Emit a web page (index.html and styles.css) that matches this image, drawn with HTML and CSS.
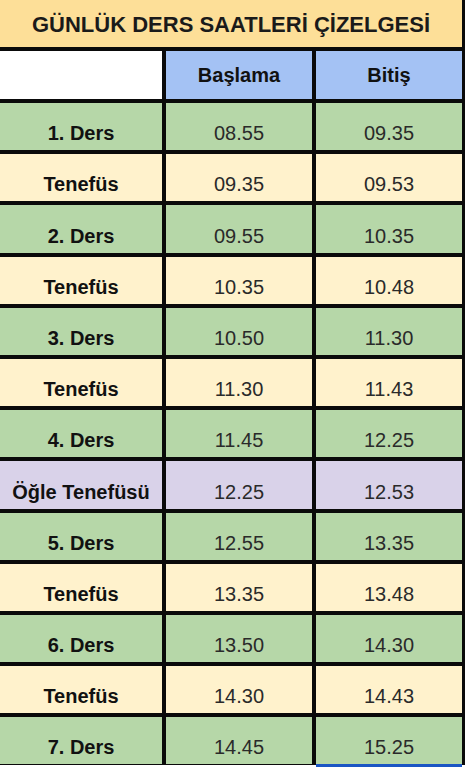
FILE: index.html
```html
<!DOCTYPE html>
<html lang="tr">
<head>
<meta charset="utf-8">
<title>Günlük Ders Saatleri Çizelgesi</title>
<link rel="stylesheet" href="styles.css">
</head>
<body>
<div class="sheet">
  <div class="title">GÜNLÜK DERS SAATLERİ ÇİZELGESİ</div>
  <div class="cell blank"></div>
  <div class="cell head">Başlama</div>
  <div class="cell head">Bitiş</div>

  <div class="cell lbl ders">1. Ders</div><div class="cell num ders">08.55</div><div class="cell num ders">09.35</div>
  <div class="cell lbl ten">Tenefüs</div><div class="cell num ten">09.35</div><div class="cell num ten">09.53</div>
  <div class="cell lbl ders">2. Ders</div><div class="cell num ders">09.55</div><div class="cell num ders">10.35</div>
  <div class="cell lbl ten">Tenefüs</div><div class="cell num ten">10.35</div><div class="cell num ten">10.48</div>
  <div class="cell lbl ders">3. Ders</div><div class="cell num ders">10.50</div><div class="cell num ders">11.30</div>
  <div class="cell lbl ten">Tenefüs</div><div class="cell num ten">11.30</div><div class="cell num ten">11.43</div>
  <div class="cell lbl ders">4. Ders</div><div class="cell num ders">11.45</div><div class="cell num ders">12.25</div>
  <div class="cell lbl ogle">Öğle Tenefüsü</div><div class="cell num ogle">12.25</div><div class="cell num ogle">12.53</div>
  <div class="cell lbl ders">5. Ders</div><div class="cell num ders">12.55</div><div class="cell num ders">13.35</div>
  <div class="cell lbl ten">Tenefüs</div><div class="cell num ten">13.35</div><div class="cell num ten">13.48</div>
  <div class="cell lbl ders">6. Ders</div><div class="cell num ders">13.50</div><div class="cell num ders">14.30</div>
  <div class="cell lbl ten">Tenefüs</div><div class="cell num ten">14.30</div><div class="cell num ten">14.43</div>
  <div class="cell lbl ders">7. Ders</div><div class="cell num ders">14.45</div><div class="cell num ders selected">15.25</div>
</div>
</body>
</html>
```
FILE: styles.css
```css
html, body {
  margin: 0;
  padding: 0;
  background: #ffffff;
}

body {
  font-family: "Liberation Sans", Arial, sans-serif;
  width: 465px;
  height: 768px;
  overflow: hidden;
}

.sheet {
  display: grid;
  grid-template-columns: 162px 146px 146px;
  grid-template-rows: 47px 48px repeat(13, 47.2px);
  gap: 4px;
  padding-right: 3px;
  padding-bottom: 1px;
  background: #0a0a0a;
  width: 465px;
  box-sizing: border-box;
}

.title {
  grid-column: 1 / 4;
  background: #fddf98;
  color: #1a1a1a;
  font-weight: bold;
  font-size: 22px;
  display: flex;
  align-items: center;
  justify-content: center;
  padding-top: 2px;
}

.cell {
  display: flex;
  justify-content: center;
  align-items: flex-end;
  padding-bottom: 5px;
  box-sizing: border-box;
  font-size: 20px;
  line-height: 23px;
}

.blank {
  background: #ffffff;
}

.head {
  background: #a4c2f4;
  color: #111111;
  font-weight: bold;
  align-items: center;
  padding-bottom: 0;
}

.lbl {
  font-weight: bold;
  color: #111111;
}

.num {
  color: #2a2a2a;
}

.ders {
  background: #b6d7a8;
}

.ten {
  background: #fff2cc;
}

.ogle {
  background: #d9d2e9;
}

.selected {
  box-shadow: 0 3px 0 #1a56c4;
}
```
